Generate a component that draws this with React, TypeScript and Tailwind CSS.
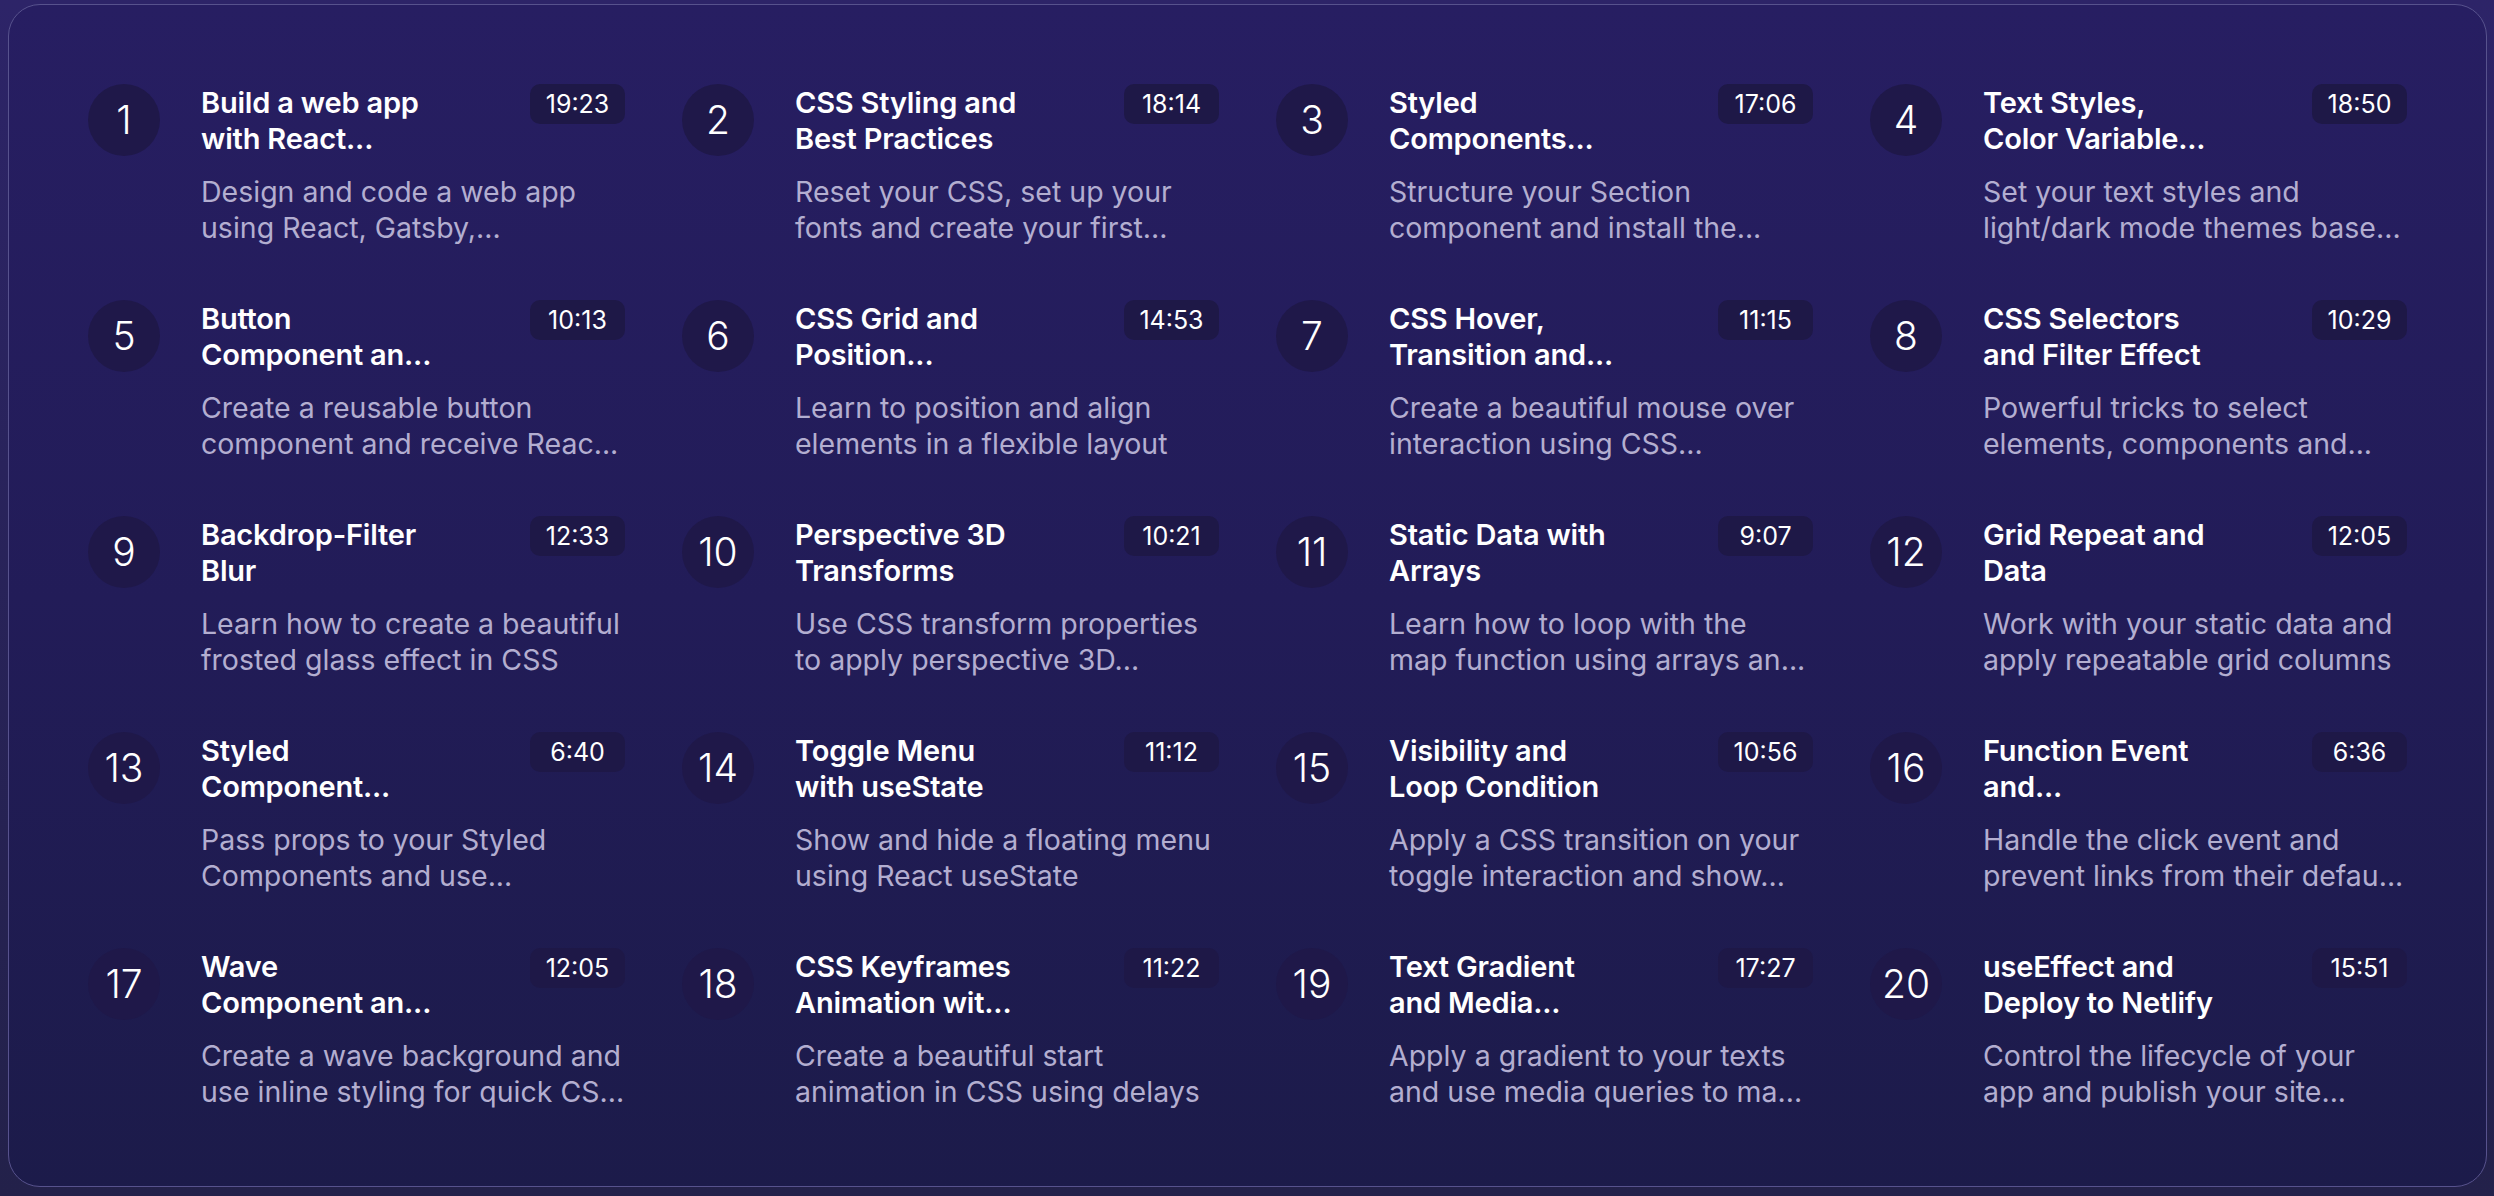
type Lesson = {
  title: [string, string];
  time: string;
  text: [string, string];
};

const lessons: Lesson[] = [
  { title: ["Build a web app", "with React..."], time: "19:23", text: ["Design and code a web app", "using React, Gatsby,..."] },
  { title: ["CSS Styling and", "Best Practices"], time: "18:14", text: ["Reset your CSS, set up your", "fonts and create your first..."] },
  { title: ["Styled", "Components..."], time: "17:06", text: ["Structure your Section", "component and install the..."] },
  { title: ["Text Styles,", "Color Variable..."], time: "18:50", text: ["Set your text styles and", "light/dark mode themes base..."] },
  { title: ["Button", "Component an..."], time: "10:13", text: ["Create a reusable button", "component and receive Reac..."] },
  { title: ["CSS Grid and", "Position..."], time: "14:53", text: ["Learn to position and align", "elements in a flexible layout"] },
  { title: ["CSS Hover,", "Transition and..."], time: "11:15", text: ["Create a beautiful mouse over", "interaction using CSS..."] },
  { title: ["CSS Selectors", "and Filter Effect"], time: "10:29", text: ["Powerful tricks to select", "elements, components and..."] },
  { title: ["Backdrop-Filter", "Blur"], time: "12:33", text: ["Learn how to create a beautiful", "frosted glass effect in CSS"] },
  { title: ["Perspective 3D", "Transforms"], time: "10:21", text: ["Use CSS transform properties", "to apply perspective 3D..."] },
  { title: ["Static Data with", "Arrays"], time: "9:07", text: ["Learn how to loop with the", "map function using arrays an..."] },
  { title: ["Grid Repeat and", "Data"], time: "12:05", text: ["Work with your static data and", "apply repeatable grid columns"] },
  { title: ["Styled", "Component..."], time: "6:40", text: ["Pass props to your Styled", "Components and use..."] },
  { title: ["Toggle Menu", "with useState"], time: "11:12", text: ["Show and hide a floating menu", "using React useState"] },
  { title: ["Visibility and", "Loop Condition"], time: "10:56", text: ["Apply a CSS transition on your", "toggle interaction and show..."] },
  { title: ["Function Event", "and..."], time: "6:36", text: ["Handle the click event and", "prevent links from their defau..."] },
  { title: ["Wave", "Component an..."], time: "12:05", text: ["Create a wave background and", "use inline styling for quick CS..."] },
  { title: ["CSS Keyframes", "Animation wit..."], time: "11:22", text: ["Create a beautiful start", "animation in CSS using delays"] },
  { title: ["Text Gradient", "and Media..."], time: "17:27", text: ["Apply a gradient to your texts", "and use media queries to ma..."] },
  { title: ["useEffect and", "Deploy to Netlify"], time: "15:51", text: ["Control the lifecycle of your", "app and publish your site..."] },
];

function LessonRow({ lesson, index }: { lesson: Lesson; index: number }) {
  return (
    <div className="flex gap-[41px]">
      <div className="flex h-[72px] w-[72px] shrink-0 items-center justify-center rounded-full bg-[#1f1849] text-[39px] font-light text-white">
        {index + 1}
      </div>
      <div className="min-w-0 flex-1">
        <div className="flex items-start justify-between">
          <p className="mt-[1px] text-[29px] font-semibold leading-[36px] tracking-[-0.2px] text-white">
            <span className="block whitespace-nowrap">{lesson.title[0]}</span>
            <span className="block whitespace-nowrap">{lesson.title[1]}</span>
          </p>
          <span className="h-[40px] min-w-[95px] rounded-[10px] bg-[#1e1847] px-[14px] text-center text-[25px] leading-[40px] text-white">
            {lesson.time}
          </span>
        </div>
        <p className="mt-[17px] text-[28.5px] leading-[36px] text-[#b3aed0]">
          <span className="block whitespace-nowrap">{lesson.text[0]}</span>
          <span className="block whitespace-nowrap">{lesson.text[1]}</span>
        </p>
      </div>
    </div>
  );
}

export default function App() {
  return (
    <main className="min-h-screen bg-linear-to-b from-[#2d2468] to-[#23214a] pb-[9px] pl-[8px] pr-[7px] pt-[4px] font-['Inter',sans-serif]">
      <section className="h-[1183px] rounded-[32px] border border-[#57528d] bg-linear-to-b from-[#271e62] via-[#221c58] to-[#1c1b4a] px-[79px] pt-[79px]">
        <div className="grid grid-cols-4 gap-x-[57px] gap-y-[54px]">
          {lessons.map((lesson, i) => (
            <LessonRow key={i} lesson={lesson} index={i} />
          ))}
        </div>
      </section>
    </main>
  );
}
